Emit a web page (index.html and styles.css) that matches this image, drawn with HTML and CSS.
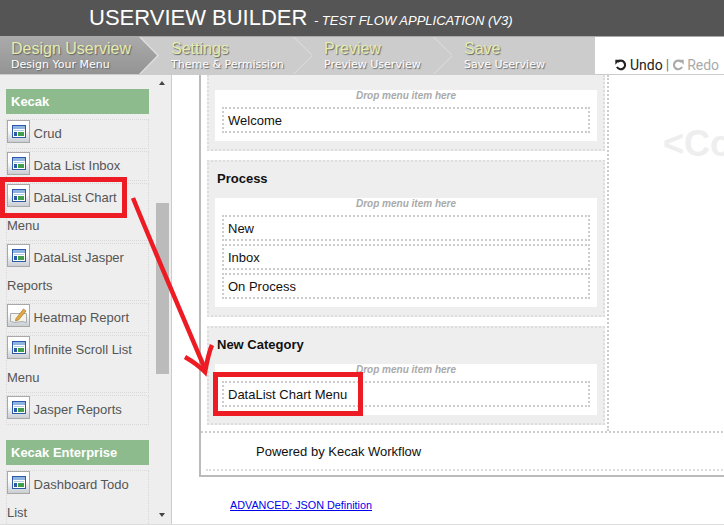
FILE: index.html
```html
<!DOCTYPE html>
<html lang="en">
<head>
  <meta charset="UTF-8">
  <title>Userview Builder</title>
  <link rel="stylesheet" href="styles.css">
</head>
<body>
  <svg width="0" height="0" class="defs">
    <defs>
      <linearGradient id="ico-bg" x1="0" y1="0" x2="0" y2="1">
        <stop offset="0.4" stop-color="#fff"/>
        <stop offset="1" stop-color="#c8ccd0"/>
      </linearGradient>
    </defs>
    <symbol id="ico-list" viewBox="0 0 23 23">
      <rect x="0.500" y="0.500" width="22" height="22" fill="url(#ico-bg)" stroke="#a8a8a8"/>
      <rect x="5" y="5" width="14" height="13" fill="#2c5aa8"/>
      <rect x="6" y="6" width="12" height="11" fill="#fff"/>
      <rect x="6" y="6" width="12" height="3" fill="#8fb4e0"/>
      <rect x="7" y="10" width="10" height="1" fill="#b4c8e4"/>
      <rect x="7" y="12" width="3" height="4" fill="#2c5aa8"/>
      <rect x="11" y="12" width="6" height="4" fill="#3fa04a"/>
    </symbol>
  </svg>

  <header class="top-bar">
    <span class="app-title">USERVIEW BUILDER</span>
    <span class="app-sub">- TEST FLOW APPLICATION (V3)</span>
  </header>

  <nav class="steps">
    <div class="step step-active">
      <b>Design Userview</b>
      <span>Design Your Menu</span>
    </div>
    <div class="step step-second">
      <b>Settings</b>
      <span>Theme &amp; Permission</span>
    </div>
    <div class="step step-third">
      <b>Preview</b>
      <span>Preview Userview</span>
    </div>
    <div class="step step-last">
      <b>Save</b>
      <span>Save Userview</span>
    </div>
    <div class="undo-box">
      <svg class="undo-ico" viewBox="0 0 14 14" width="12" height="12"><path d="M3.200 3.400 A5 5 0 1 1 2.300 9.200" fill="none" stroke="#222" stroke-width="2.500"/><path d="M0.400 1 L6 1 L0.400 6.600 Z" fill="#222"/></svg>
      <span class="undo-on">Undo</span>
      <span class="undo-sep">|</span>
      <svg class="undo-ico" viewBox="0 0 14 14" width="12" height="12"><path d="M10.800 3.400 A5 5 0 1 0 11.700 9.200" fill="none" stroke="#aaa" stroke-width="2.500"/><path d="M13.600 1 L8 1 L13.600 6.600 Z" fill="#aaa"/></svg>
      <span class="undo-off">Redo</span>
    </div>
  </nav>

  <main class="main">
    <aside class="sidebar">
      <div class="palette">
        <h4 class="palette-head">Kecak</h4>
        <div class="palette-item"><svg class="ico"><use href="#ico-list"/></svg> Crud</div>
        <div class="palette-item"><svg class="ico"><use href="#ico-list"/></svg> Data List Inbox</div>
        <div class="palette-item"><svg class="ico"><use href="#ico-list"/></svg> DataList Chart Menu</div>
        <div class="palette-item"><svg class="ico"><use href="#ico-list"/></svg> DataList Jasper Reports</div>
        <div class="palette-item">
          <svg class="ico" viewBox="0 0 23 23">
            <rect x="0.500" y="0.500" width="22" height="22" fill="url(#ico-bg)" stroke="#a8a8a8"/>
            <path d="M3.500 9.500 H19.500 V18.500 L15 17.500 L8 18.500 L3.500 17.500 Z" fill="#f6f4ea" stroke="#a8acb0"/>
            <path d="M9 14.500 L16.500 5 L19 7 L11.500 16 L8.500 17 Z" fill="#e8a840" stroke="#8a6a30" stroke-width="0.600"/>
          </svg> Heatmap Report</div>
        <div class="palette-item"><svg class="ico"><use href="#ico-list"/></svg> Infinite Scroll List Menu</div>
        <div class="palette-item"><svg class="ico"><use href="#ico-list"/></svg> Jasper Reports</div>
        <h4 class="palette-head palette-head-next">Kecak Enterprise</h4>
        <div class="palette-item"><svg class="ico"><use href="#ico-list"/></svg> Dashboard Todo List</div>
      </div>
      <div class="scrollbar">
        <i class="arrow-up"></i>
        <i class="thumb"></i>
        <i class="arrow-down"></i>
      </div>
    </aside>

    <section class="canvas">
      <div class="builder">
        <div class="builder-row">
          <div class="menu-col">
            <div class="category category-first">
              <div class="drop-zone">
                <p class="drop-hint">Drop menu item here</p>
                <div class="menu-item">Welcome</div>
              </div>
            </div>
            <div class="category">
              <h3>Process</h3>
              <div class="drop-zone">
                <p class="drop-hint">Drop menu item here</p>
                <div class="menu-item">New</div>
                <div class="menu-item">Inbox</div>
                <div class="menu-item">On Process</div>
              </div>
            </div>
            <div class="category">
              <h3>New Category</h3>
              <div class="drop-zone">
                <p class="drop-hint">Drop menu item here</p>
                <div class="menu-item">DataList Chart Menu</div>
              </div>
            </div>
          </div>
          <div class="content-col"><span>&lt;Content&gt;</span></div>
        </div>
        <div class="footer-row">Powered by Kecak Workflow</div>
      </div>
      <a class="json-link" href="#">ADVANCED: JSON Definition</a>
    </section>
  </main>

  <!-- red marks drawn over the screenshot -->
  <svg class="marks" width="724" height="525" viewBox="0 0 724 525">
    <g fill="none" stroke="#ed1c24" stroke-width="5">
      <rect x="2.500" y="179.500" width="122" height="36"/>
      <rect x="215.500" y="374.500" width="145" height="39"/>
      <path d="M133 198 C150 240 180 310 205 369" stroke-width="4.500"/>
      <path d="M212 345 C209 352 207 361 205 372 C199 366 192 361 185 357" stroke-width="4.500"/>
    </g>
  </svg>
</body>
</html>
```

FILE: styles.css
```css
html, body {
  margin: 0;
  height: 525px;
  overflow: hidden;
}
body {
  font-family: "Liberation Sans", Arial, sans-serif;
  background: #fff;
  position: relative;
}
.defs {
  display: block;
  height: 0;
}
.top-bar {
  height: 36px;
  background: #555;
  border-bottom: 1px solid #aaa;
  color: #fff;
  padding-left: 89px;
  line-height: 35px;
  white-space: nowrap;
}
.app-title {
  font-size: 22px;
}
.app-sub {
  font-size: 13px;
  font-style: italic;
  margin-left: 2px;
}
.steps {
  display: flex;
  height: 37px;
  background: #ccc;
  border-bottom: 1px solid #ccc;
}
.step {
  position: relative;
  box-sizing: border-box;
  padding-top: 2px;
  white-space: nowrap;
}
.step b {
  display: block;
  font-weight: normal;
  font-size: 16px;
  line-height: 19px;
  color: #e4ecae;
  text-shadow: 1px 1px 1px #666;
}
.step span {
  display: block;
  font-family: "DejaVu Sans", sans-serif;
  font-size: 11px;
  line-height: 14px;
  color: #fff;
  text-shadow: 1px 1px 1px #666;
}
.step::after {
  content: "";
  position: absolute;
  top: 0;
  right: 0;
  width: 19px;
  height: 37px;
  background: #dedede;
  clip-path: polygon(0 0, 100% 50%, 0 100%, 6% 100%, 100% 53%, 100% 47%, 6% 0);
}
.step-active {
  z-index: 0;
  width: 159px;
  margin-right: -2px;
  padding-left: 11px;
  background: #dedede;
  clip-path: polygon(0 0, 141px 0, 159px 50%, 141px 100%, 0 100%);
}
.step-active::before {
  content: "";
  position: absolute;
  z-index: -1;
  top: 0;
  left: 0;
  width: 157px;
  height: 37px;
  background: linear-gradient(#aaa, #949494);
  clip-path: polygon(0 0, 139px 0, 157px 50%, 139px 100%, 0 100%);
}
.step-second {
  width: 155px;
  padding-left: 14px;
}
.step-third {
  width: 140px;
  padding-left: 12px;
}
.step-last {
  width: 143px;
  padding-left: 12px;
}
.step-active::after {
  display: none;
}
.step-last::after {
  display: none;
}
.undo-box {
  flex: 1;
  background: #fff;
  display: flex;
  align-items: center;
  gap: 3px;
  padding: 18px 0 0 20px;
  font-family: Roboto, sans-serif;
  font-size: 14px;
  white-space: nowrap;
}
.undo-on {
  color: #222;
}
.undo-sep {
  color: #777;
}
.undo-off {
  color: #aaa;
}
.main {
  display: flex;
  height: 450px;
  border-bottom: 1px solid #ddd;
  box-sizing: border-box;
}
.sidebar {
  width: 171px;
  flex: none;
  display: flex;
  background: #eee;
  border-right: 1px solid #ccc;
  overflow: hidden;
}
.palette {
  width: 143px;
  margin-left: 6px;
  padding-top: 14px;
  flex: none;
  color: #555;
  font-size: 13px;
}
.palette-head {
  margin: 0 0 5px;
  height: 25px;
  line-height: 25px;
  background: #8ebb8e;
  color: #fff;
  font-size: 13px;
  padding-left: 5px;
}
.palette-head-next {
  margin-top: 15px;
}
.palette-item {
  border: 1px dotted #d8d8d8;
  line-height: 28px;
  margin-bottom: 2px;
}
.ico {
  width: 23px;
  height: 23px;
  vertical-align: top;
}
.scrollbar {
  position: relative;
  width: 13px;
  margin-left: 7px;
  flex: none;
}
.thumb {
  position: absolute;
  top: 128px;
  left: 0;
  width: 13px;
  height: 171px;
  background: #bbb;
}
.arrow-up, .arrow-down {
  position: absolute;
  left: 3px;
  width: 0;
  height: 0;
  border-left: 3.500px solid transparent;
  border-right: 3.500px solid transparent;
}
.arrow-up {
  top: 6px;
  border-bottom: 4px solid #444;
}
.arrow-down {
  bottom: 7px;
  border-top: 4px solid #444;
}
.canvas {
  flex: 1;
  min-width: 0;
  padding-left: 27px;
  overflow: hidden;
}
.builder {
  box-sizing: border-box;
  width: 560px;
  height: 402px;
  border-left: 2px solid #bbb;
  border-bottom: 2px solid #bbb;
}
.builder-row {
  display: flex;
  height: 358px;
  border-bottom: 2px dotted #ccc;
  box-sizing: border-box;
}
.menu-col {
  width: 398px;
  margin-left: 6px;
  flex: none;
}
.content-col {
  flex: 1;
  margin-left: 2px;
  border-left: 2px dotted #ccc;
  overflow: hidden;
  padding: 48px 0 0 54px;
  font-weight: bold;
  font-size: 36px;
  color: #eee;
  white-space: nowrap;
}
.category {
  background: #eee;
  border: 2px dotted #ddd;
  padding: 0 6px 8px;
  margin-bottom: 9px;
}
.category-first {
  border-top: 0;
  padding-top: 15px;
}
.category h3 {
  margin: 0 0 2px;
  font-size: 13px;
  line-height: 34px;
  color: #111;
  padding-left: 2px;
}
.drop-zone {
  background: #fff;
  padding: 0 7px 8px;
}
.drop-hint {
  margin: 0 0 5px;
  text-align: center;
  font-size: 10px;
  font-weight: bold;
  font-style: italic;
  color: #aaa;
  line-height: 12px;
}
.menu-item {
  border: 2px dotted #ccc;
  height: 22px;
  line-height: 24px;
  padding-left: 4px;
  font-size: 13px;
  color: #111;
  margin-bottom: 3px;
}
.menu-item:last-child {
  margin-bottom: 0;
}
.footer-row {
  height: 36px;
  margin-left: 5px;
  border-bottom: 2px dotted #ddd;
  line-height: 38px;
  padding-left: 50px;
  font-size: 13px;
  color: #111;
}
.json-link {
  display: block;
  margin: 22px 0 0 31px;
  font-size: 10.800px;
  color: #00e;
}
.marks {
  position: absolute;
  top: 0;
  left: 0;
  pointer-events: none;
}
```
